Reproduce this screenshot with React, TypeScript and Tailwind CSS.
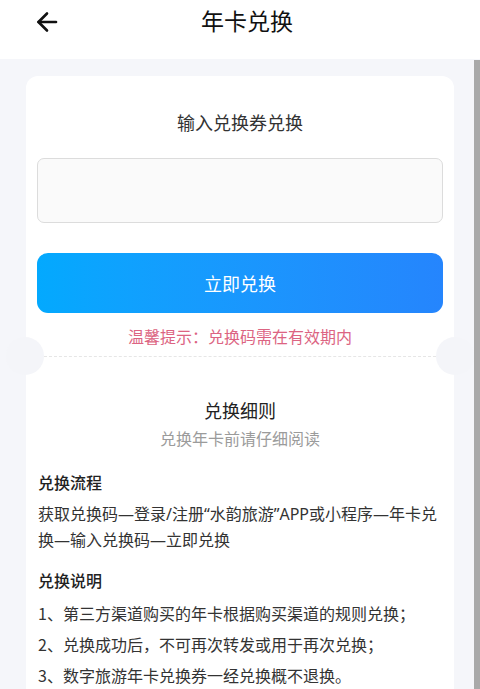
import React from 'react';

const font = { fontFamily: '"Noto Sans CJK SC", "Noto Sans", sans-serif' };
const mixed = { fontFamily: '"Noto Sans", "Noto Sans CJK SC", sans-serif' };

const BackArrow = () => (
  <svg width="22" height="22" viewBox="0 0 22 22" fill="none" stroke="#111" strokeWidth="2.6" strokeLinecap="round" strokeLinejoin="round">
    <path d="M20 11H2.5" />
    <path d="M11 2.5 2.5 11 11 19.5" />
  </svg>
);

const rules = [
  '1、第三方渠道购买的年卡根据购买渠道的规则兑换；',
  '2、兑换成功后，不可再次转发或用于再次兑换；',
  '3、数字旅游年卡兑换券一经兑换概不退换。',
];

export default function App() {
  return (
    <div className="relative w-[480px] h-[689px] overflow-hidden bg-[#f5f6fa]" style={font}>
      <div className="relative h-[59px] bg-white flex items-center justify-center">
        <div className="absolute left-[36px] top-[11px]">
          <BackArrow />
        </div>
        <div className="text-[23px] leading-[30px] text-[#111] pl-[14px] -mt-[20px]">年卡兑换</div>
      </div>

      <div className="px-[26px] pt-[17px]">
        <div className="bg-white rounded-[12px] pb-[40px]">
          <div className="pt-[33px] text-center text-[18px] leading-[26px] text-[#333]">输入兑换券兑换</div>
          <div className="mx-[11px] mt-[23px] h-[65px] rounded-[7px] border border-[#dcdcdc] bg-[#fafafa]" />
          <button className="mx-[11px] mt-[30px] h-[60px] w-[406px] rounded-[11px] bg-gradient-to-r from-[#03a9fe] to-[#2585fd] text-white text-[18px] flex items-center justify-center">
            立即兑换
          </button>
          <div className="mt-[11px] text-center text-[16px] leading-[24px] text-[#dc6482]">温馨提示：兑换码需在有效期内</div>

          <div className="relative mt-[8px] h-0">
            <div className="absolute -left-[20px] -top-[19px] w-[38px] h-[38px] rounded-full bg-[#f4f5f9]" />
            <div className="absolute -right-[20px] -top-[19px] w-[38px] h-[38px] rounded-full bg-[#f4f5f9]" />
            <div className="mx-[18px] border-t border-dashed border-[#e6e6e6]" />
          </div>

          <div className="mt-[41px] text-center text-[18px] leading-[26px] text-[#222]">兑换细则</div>
          <div className="mt-[3px] text-center text-[16px] leading-[24px] text-[#9b9b9b]">兑换年卡前请仔细阅读</div>

          <div className="px-[12px]">
            <div className="mt-[20px] text-[16px] leading-[24px] font-medium text-[#222]">兑换流程</div>
            <div className="mt-[7px] text-[16px] leading-[26px] text-[#333]" style={mixed}>
              获取兑换码—登录/注册“水韵旅游”APP或小程序—年卡兑换—输入兑换码—立即兑换
            </div>
            <div className="mt-[15px] text-[16px] leading-[24px] font-medium text-[#222]">兑换说明</div>
            <div className="mt-[6px] flex flex-col">
              {rules.map(r => (
                <div key={r} className="text-[16px] leading-[31px] text-[#333]">{r}</div>
              ))}
            </div>
          </div>
        </div>
      </div>

      <div className="absolute right-0 top-[60px] bottom-0 w-[6px] bg-[#a9a9a9]" />
    </div>
  );
}
